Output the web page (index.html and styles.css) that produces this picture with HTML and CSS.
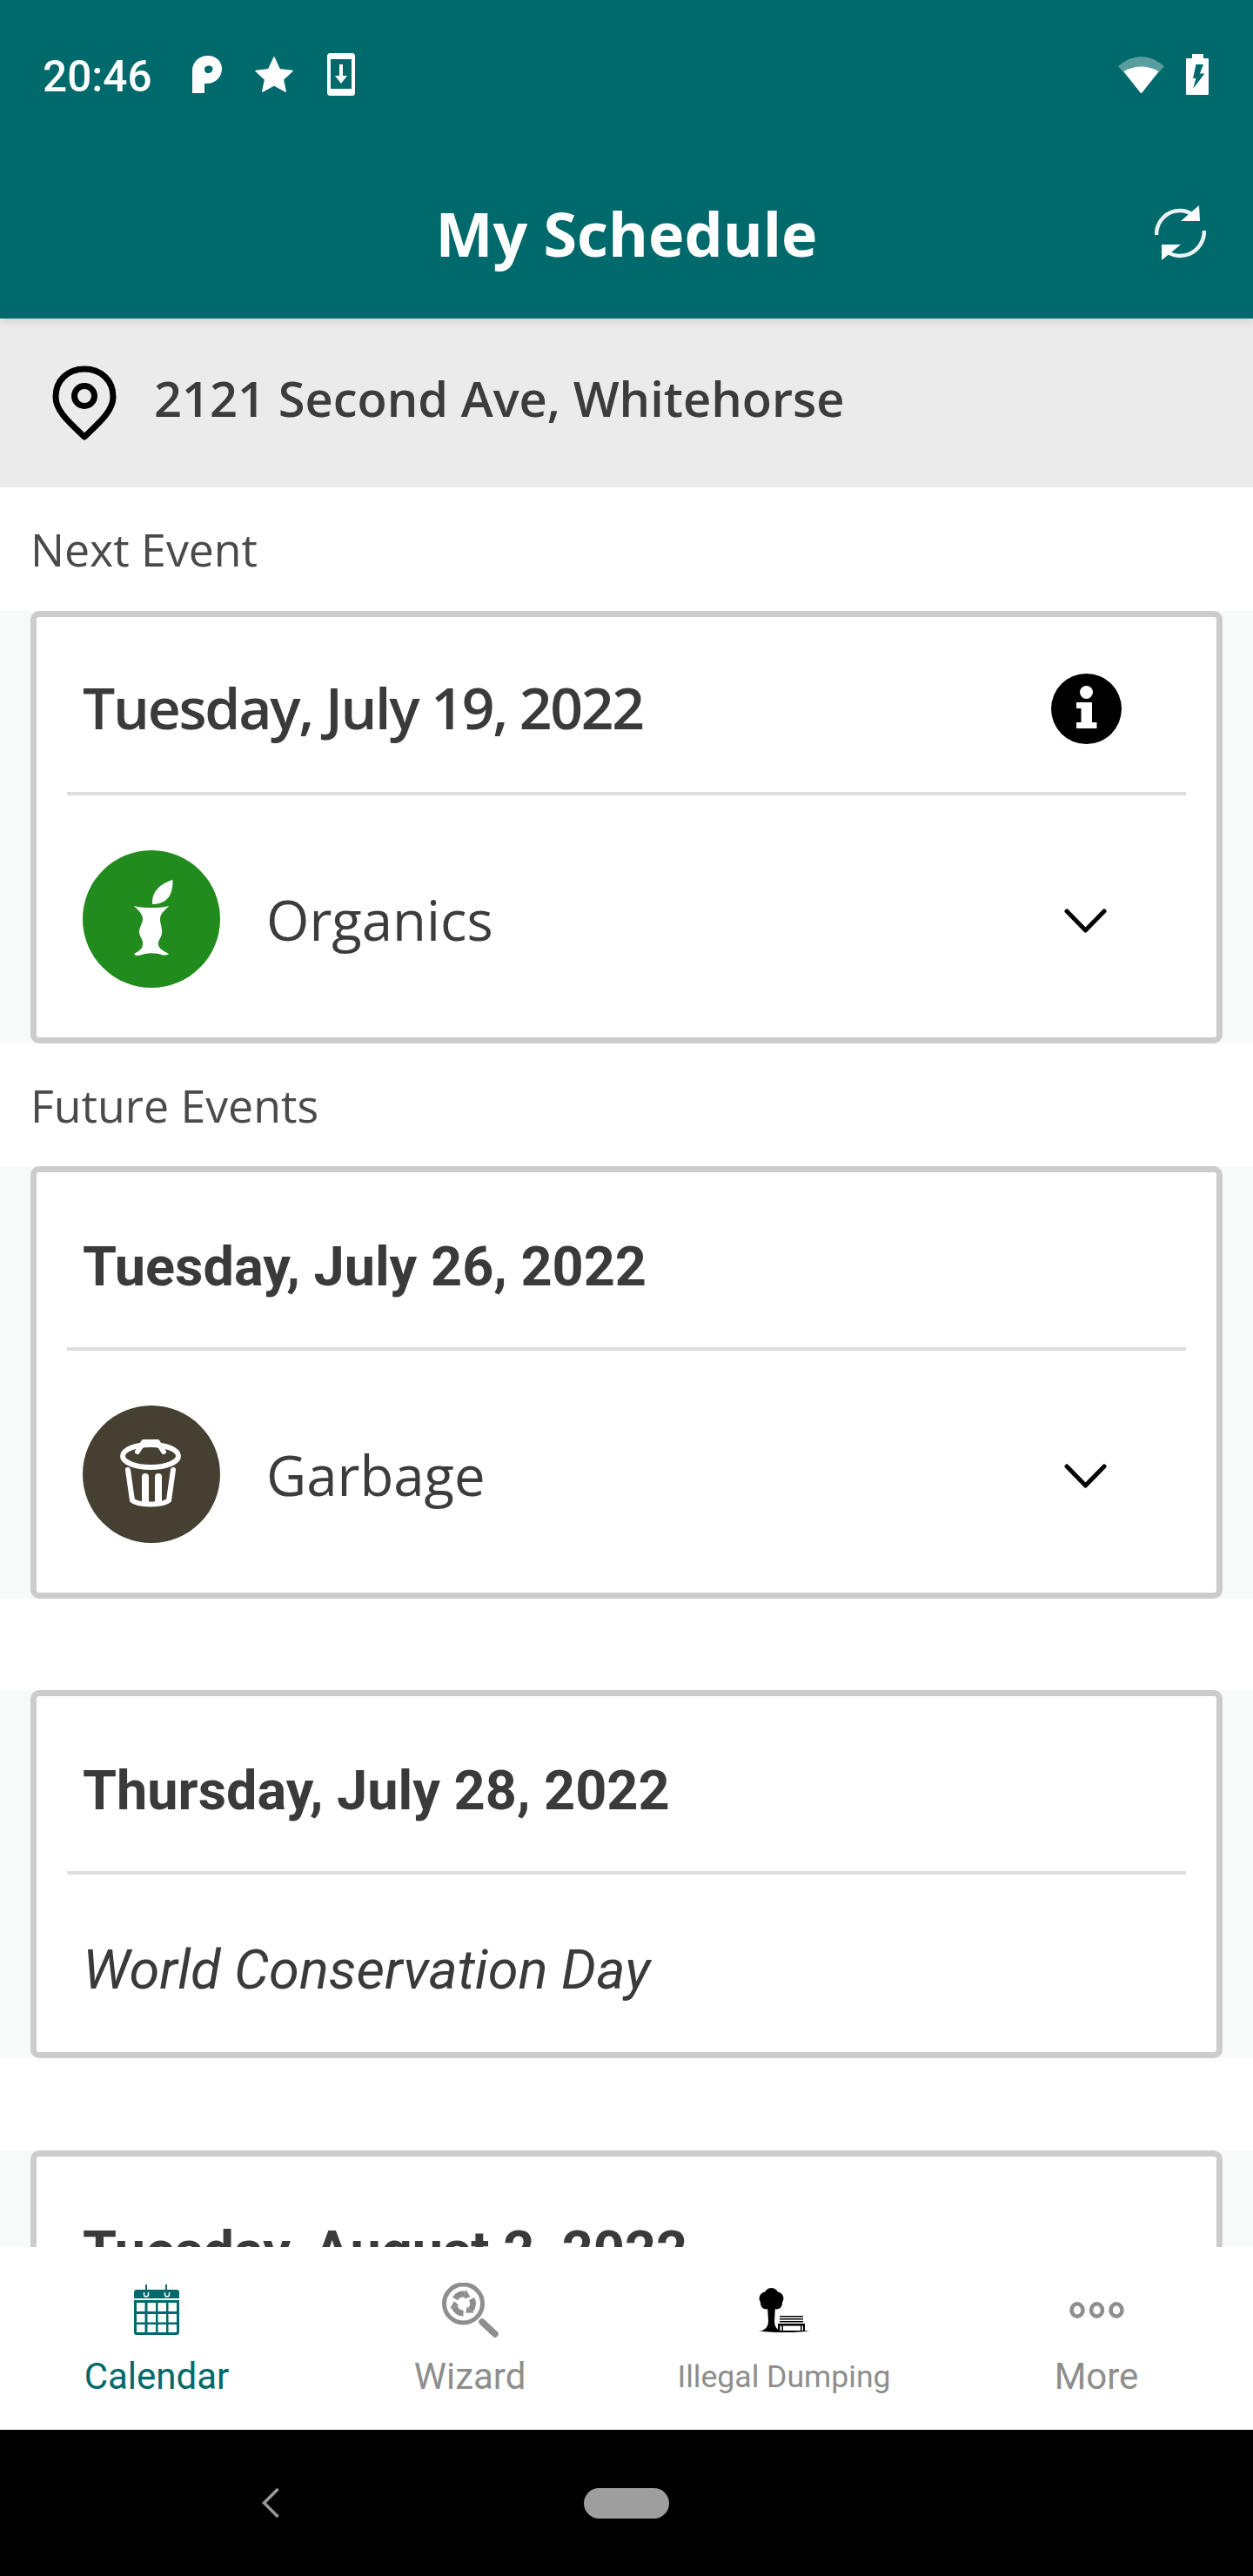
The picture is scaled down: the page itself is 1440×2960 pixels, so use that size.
FILE: index.html
```html
<!DOCTYPE html>
<html lang="en">
<head>
<meta charset="utf-8">
<title>My Schedule</title>
<link rel="stylesheet" href="styles.css">
</head>
<body>
<div class="app">
  <header class="header">
    <div class="status">
      <div class="status-left">
        <span class="clock">20:46</span>
        <svg class="ic-p" viewBox="0 0 34 43"><path fill="#fff" fill-rule="evenodd" d="M0 43V17C0 7 8 0 18 0c10 0 16 7 16 15 0 10-8 17-17 17h-3v11zM14 15.500c0 3 1.500 4.500 4 4.500 3 0 5.500-2 5.500-5 0-2-1.500-3.500-4-3.500-3 0-5.500 1.500-5.500 4z"/></svg>
        <svg class="ic-star" viewBox="0 0 44 41"><path fill="#fff" stroke="#fff" stroke-width="1.500" stroke-linejoin="round" d="M22 1l6.300 13.700L43 16.500 32.300 26.500 35.200 40 22 32.800 8.800 40l2.900-13.500L1 16.500l14.700-1.800z"/></svg>
        <svg class="ic-phone" viewBox="0 0 32 49"><rect width="32" height="49" rx="3.500" fill="#fff"/><rect x="4" y="7" width="24" height="34" fill="#00696b"/><path fill="#fff" d="M14 13h4v13h5l-7 9-7-9h5z"/></svg>
      </div>
      <div class="status-right">
        <svg class="ic-wifi" viewBox="0 0 53 42"><path fill="#fff" opacity=".35" d="M0 11Q26.500-11 53 11L26.500 42z"/><path fill="#fff" d="M6.500 17Q26.500 6 46.500 17L27.500 41.500q-1 1-2 0z"/></svg>
        <svg class="ic-batt" viewBox="0 0 26 47"><path fill="#fff" d="M7 0h13v5h5q1 0 1 1v40q0 1-1 1H1q-1 0-1-1V6q0-1 1-1h6z"/><path fill="#00696b" d="M11.500 12H20l-4 10.500h5.500L8 40l3.500-12H8z"/></svg>
      </div>
    </div>
    <div class="appbar">
      <h1 class="title">My Schedule</h1>
      <svg class="ic-refresh" viewBox="0 0 59 64"><g fill="none" stroke="#fff" stroke-width="4.500" stroke-opacity=".92"><path d="M2 34C2 18 14 6 29 6c6 0 11 2 15 5"/><path d="M57 29c0 16-12 29-28 29-6 0-11-2-15-5"/></g><path fill="#fff" d="M51 0l1 18H30zM8 63V45h22z"/></svg>
    </div>
  </header>

  <div class="address">
    <svg class="ic-pin" viewBox="0 0 74 87"><path fill="none" stroke="#000" stroke-width="7" stroke-linejoin="round" d="M37 82C19 65 4 52 4 36 4 17 18 4 37 4s33 13 33 32c0 16-15 29-33 46z"/><circle cx="37" cy="35" r="11.500" fill="none" stroke="#000" stroke-width="7"/></svg>
    <span class="address-text">2121 Second Ave, Whitehorse</span>
  </div>

  <main class="content">
    <div class="section-label">Next Event</div>
    <div class="row">
      <article class="card">
        <div class="card-head">
          <h2 class="date-os">Tuesday, July 19, 2022</h2>
          <svg class="ic-info" viewBox="0 0 81 81"><circle cx="40.500" cy="40.500" r="40.500" fill="#000"/><circle cx="40.500" cy="21.500" r="7.500" fill="#fff"/><path fill="#fff" d="M29 33h18v23h5.500v7h-23.500v-7h5.500V40H29z"/></svg>
        </div>
        <div class="card-rule"></div>
        <div class="card-body">
          <svg class="ic-round" viewBox="0 0 158 158"><circle cx="79" cy="79" r="79" fill="#228b1e"/><path fill="#fff" d="M80 62C79 47 90 38 103.500 34 104 50 98 62 80 62z"/><path fill="#fff" d="M59 64c8 2 14 2 20 2s13 0 20-2c-3 4-10 8-10 15 0 6 3 11 2 17-1 5-5 8-4 13 1 4 6 7 12 10-4 3-8 1-12 0-5-1-11-1-15 0-5 1-10 4-13 0 6-3 10-6 10-11 1-5-4-9-4-14 0-6 4-10 4-15 0-6-6-11-10-15z"/></svg>
          <span class="item-name">Organics</span>
          <svg class="ic-chev" viewBox="0 0 49 28"><path fill="none" stroke="#000" stroke-width="5" stroke-linecap="round" stroke-linejoin="round" d="M3 3l21.500 22L46 3"/></svg>
        </div>
      </article>
    </div>

    <div class="section-label section-label-next">Future Events</div>
    <div class="row">
      <article class="card">
        <div class="card-head"><h2 class="date">Tuesday, July 26, 2022</h2></div>
        <div class="card-rule"></div>
        <div class="card-body">
          <svg class="ic-round" viewBox="0 0 158 158"><circle cx="79" cy="79" r="79" fill="#464032"/><g fill="none" stroke="#fff" stroke-width="6" stroke-linecap="round" stroke-linejoin="round"><ellipse cx="78" cy="58" rx="32" ry="13"/><path d="M63 53l7-11h16l7 11"/><path d="M52 74l5 35c6 6 36 6 42 0l5-35"/><path stroke-width="8" d="M72 82v29M87 82v29"/></g></svg>
          <span class="item-name">Garbage</span>
          <svg class="ic-chev" viewBox="0 0 49 28"><path fill="none" stroke="#000" stroke-width="5" stroke-linecap="round" stroke-linejoin="round" d="M3 3l21.500 22L46 3"/></svg>
        </div>
      </article>
    </div>

    <div class="row row-gap">
      <article class="card">
        <div class="card-head"><h2 class="date">Thursday, July 28, 2022</h2></div>
        <div class="card-rule"></div>
        <div class="card-body card-body-short"><em class="holiday">World Conservation Day</em></div>
      </article>
    </div>

    <div class="row row-gap-last">
      <article class="card">
        <div class="card-head"><h2 class="date">Tuesday, August 2, 2022</h2></div>
      </article>
    </div>
  </main>

  <nav class="tabs">
    <div class="tab tab-active">
      <div class="tab-icon">
        <svg class="ic-cal" viewBox="0 0 52 58"><path fill="#00696b" d="M3 6h10V0h2v6h21V0h2v6h11q3 0 3 3v7H0V9q0-3 3-3z"/><path fill="none" stroke="#fff" stroke-width="1.500" d="M11.500 9v2.500a2.500 2.500 0 0 0 5 0V9M35.500 9v2.500a2.500 2.500 0 0 0 5 0V9"/><path fill="#00696b" d="M0 18h52v37q0 3-3 3H3q-3 0-3-3z"/><path fill="#fff" d="M3 21h9.500v10H3zM15.500 21h9.500v10h-9.500zM27.500 21h9.500v10h-9.500zM39.500 21h9.500v10h-9.500zM3 34h9.500v9.500H3zM15.500 34h9.500v9.500h-9.500zM27.500 34h9.500v9.500h-9.500zM39.500 34h9.500v9.500h-9.500zM3 46h9.500v9H3zM15.500 46h9.500v9h-9.500zM27.500 46h9.500v9h-9.500zM39.500 46h9.500v9h-9.500z"/></svg>
      </div>
      <span class="tab-label">Calendar</span>
    </div>
    <div class="tab">
      <div class="tab-icon">
        <svg class="ic-wiz" viewBox="0 0 65 63"><circle cx="24.500" cy="24" r="22" fill="none" stroke="#8e8e8e" stroke-width="5"/><path stroke="#8e8e8e" stroke-width="7.500" stroke-linecap="round" d="M46 45l15 14"/><g transform="translate(24.500 24)" fill="#8e8e8e"><g id="rec"><path fill="none" stroke="#8e8e8e" stroke-width="7" d="M-9.530-5.500A11 11 0 0 1 1.910-10.830"/><path d="M.96-5.420L2.870-16.250 7.780-7.780z"/></g><use href="#rec" transform="rotate(120)"/><use href="#rec" transform="rotate(240)"/></g></svg>
      </div>
      <span class="tab-label">Wizard</span>
    </div>
    <div class="tab">
      <div class="tab-icon">
        <svg class="ic-tree" viewBox="0 0 58 51"><g fill="#000"><circle cx="14.500" cy="8" r="8"/><circle cx="8" cy="12" r="7.500"/><circle cx="21" cy="12" r="7.500"/><circle cx="8.500" cy="18" r="6.500"/><circle cx="20.500" cy="18" r="6.500"/><circle cx="14.500" cy="16" r="9"/><path d="M10 22l1 16q0 8-7 11h20q-6-3-6-11l1-16z"/><path d="M0 49h58q-8 2-29 2T0 49z"/><path d="M24 32h27v1.500H24zM24 35h27v1.500H24zM24 38h27v1.500H24zM22 41h31v2.500H22zM22 43h2.500v7H22zM26.500 43h1.500v7h-1.500zM48 43h1.500v7H48zM51 43h2v7h-2z"/></g></svg>
      </div>
      <span class="tab-label tab-label-small">Illegal Dumping</span>
    </div>
    <div class="tab">
      <div class="tab-icon">
        <svg class="ic-more" viewBox="0 0 63 19"><g fill="none" stroke="#8e8e8e" stroke-width="4.500"><ellipse cx="9" cy="9.500" rx="6.500" ry="7.200"/><ellipse cx="31.500" cy="9.500" rx="6.500" ry="7.200"/><ellipse cx="54" cy="9.500" rx="6.500" ry="7.200"/></g></svg>
      </div>
      <span class="tab-label">More</span>
    </div>
  </nav>

  <footer class="navbar">
    <svg class="ic-back" viewBox="0 0 20 34"><path fill="none" stroke="#999" stroke-width="3.500" d="M18.500 1L2.500 17l16 16"/></svg>
    <div class="pill"></div>
    <div></div>
  </footer>
</div>
</body>
</html>
```
FILE: styles.css
```css
* { box-sizing: border-box; }
html, body { margin: 0; padding: 0; }
body { background: #fff; font-family: "Open Sans", sans-serif; color: #3a3a3a; }
svg { display: block; flex: none; }
h1, h2 { margin: 0; }

.app { width: 1440px; height: 2960px; display: flex; flex-direction: column; overflow: hidden; }

.header { flex: none; height: 366px; background: #00696b; color: #fff; position: relative; z-index: 2; box-shadow: 0 3px 10px rgba(0,0,0,.12); }
.status { height: 170px; display: flex; align-items: center; justify-content: space-between; padding: 0 51px 0 49px; }
.status-left { display: flex; align-items: center; }
.status-right { display: flex; align-items: center; gap: 25px; margin-top: 1px; }
.clock { font-family: Roboto, sans-serif; font-size: 49.500px; font-weight: 500; line-height: 60px; margin-top: 6px; margin-right: 46px; }
.ic-p { width: 34px; height: 43px; margin-right: 38px; }
.ic-star { width: 44px; height: 41px; margin-right: 39px; }
.ic-phone { width: 32px; height: 49px; }
.ic-wifi { width: 53px; height: 42px; }
.ic-batt { width: 26px; height: 47px; }

.appbar { height: 196px; display: grid; grid-template-columns: 1fr auto 1fr; align-items: center; }
.title { grid-column: 2; font-size: 70px; line-height: 96px; font-weight: 700; color: #fff; }
.ic-refresh { grid-column: 3; justify-self: end; width: 59px; height: 64px; margin-right: 54px; }

.address { flex: none; height: 194px; background: #ebebeb; display: flex; align-items: center; padding-left: 60px; gap: 43px; }
.ic-pin { width: 74px; height: 87px; }
.address-text { font-size: 56px; font-weight: 600; line-height: 76px; margin-top: -12px; color: #3c3c3c; }

.content { flex: 1; min-height: 0; overflow: hidden; background: #fff; }
.section-label { height: 142px; display: flex; align-items: center; padding-left: 35px; font-size: 51.800px; color: #4a4a4a; }
.section-label-next { height: 141px; }
.row { background: #f8faf9; padding: 0 35px; }
.row-gap { margin-top: 105px; }
.row-gap-last { margin-top: 106px; }
.card { background: #fff; border: 7px solid #cccccc; border-radius: 10px; }
.card-head { height: 201px; display: flex; align-items: center; justify-content: space-between; padding: 0 109px 0 53px; }
.date-os { font-size: 66px; font-weight: 600; line-height: 90px; margin-top: 4px; letter-spacing: -2.250px; color: #3a3a3a; }
.date { font-family: Roboto, sans-serif; font-size: 63px; font-weight: 700; line-height: 80px; margin-top: 16px; color: #3a3a3a; }
.ic-info { width: 81px; height: 81px; margin-top: 10px; }
.card-rule { height: 4px; margin: 0 35px; background: #dedede; }
.card-body { height: 278px; display: flex; align-items: center; padding: 6px 126px 0 53px; }
.card-body-short { height: 204px; padding-top: 0; }
.ic-round { width: 158px; height: 158px; margin-right: 53px; }
.item-name { flex: 1; font-size: 63.500px; line-height: 86px; margin-top: 2px; color: #3c3c3c; }
.ic-chev { width: 49px; height: 28px; margin-top: 4px; }
.holiday { font-family: Roboto, sans-serif; font-size: 63.200px; line-height: 80px; margin-top: 14px; font-style: italic; color: #3a3a3a; }

.tabs { flex: none; height: 210px; background: #fff; display: grid; grid-template-columns: repeat(4, 1fr); padding-top: 40px; position: relative; z-index: 1; }
.tab { display: flex; flex-direction: column; align-items: center; color: #8e8e8e; }
.tab-active { color: #00696b; }
.tab-icon { height: 64px; display: flex; align-items: center; justify-content: center; margin-bottom: 20px; }
.tab-label { font-family: Roboto, sans-serif; font-size: 42px; line-height: 50px; }
.tab-label-small { font-size: 35.600px; margin-left: 2px; }
.ic-cal { width: 52px; height: 58px; }
.ic-wiz { width: 65px; height: 63px; }
.ic-tree { width: 58px; height: 51px; margin-left: 2px; }
.ic-more { width: 63px; height: 19px; }

.navbar { flex: none; height: 168px; background: #000; display: grid; grid-template-columns: 1fr auto 1fr; align-items: center; }
.ic-back { justify-self: end; width: 20px; height: 34px; margin-right: 350px; }
.pill { width: 98px; height: 35px; border-radius: 18px; background: #9e9e9e; }
```
